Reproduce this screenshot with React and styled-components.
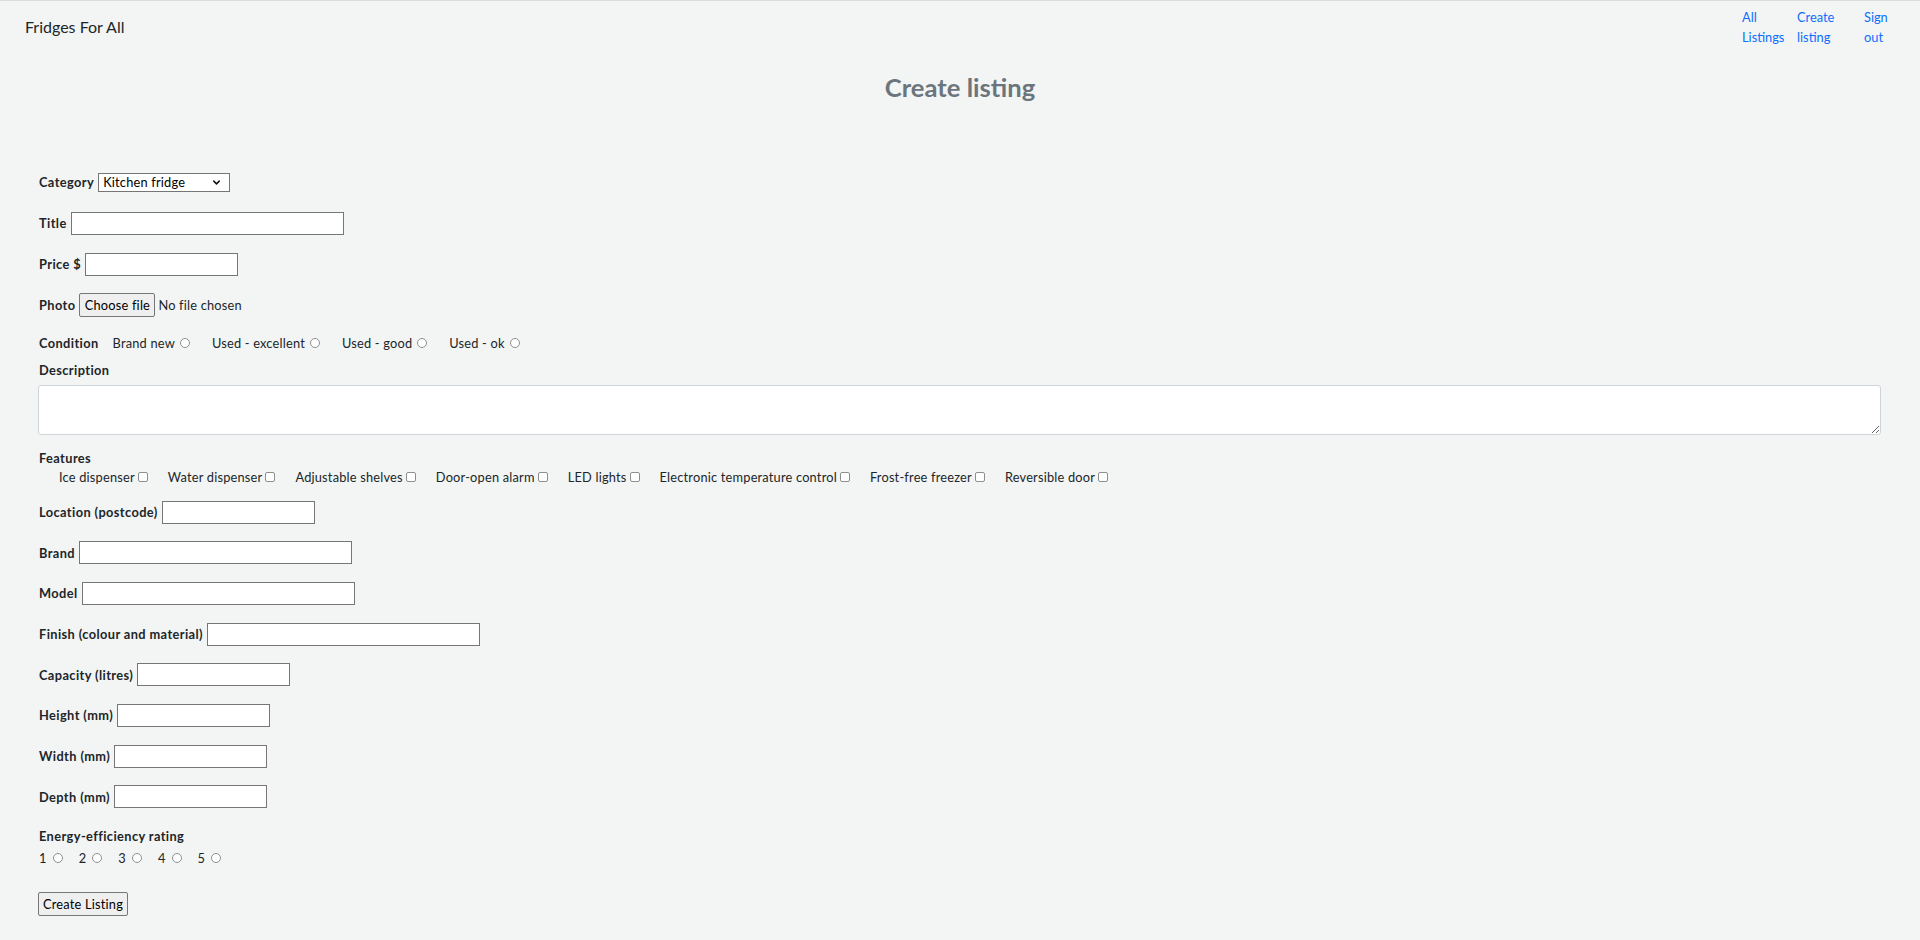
import styled, { createGlobalStyle } from "styled-components";
import { ChevronDown } from "lucide-react";

const conditions = ["Brand new", "Used - excellent", "Used - good", "Used - ok"];

const features = [
	"Ice dispenser",
	"Water dispenser",
	"Adjustable shelves",
	"Door-open alarm",
	"LED lights",
	"Electronic temperature control",
	"Frost-free freezer",
	"Reversible door",
];

const sizedFields = [
	{ label: "Location (postcode)", wide: false },
	{ label: "Brand", wide: true },
	{ label: "Model", wide: true },
	{ label: "Finish (colour and material)", wide: true },
	{ label: "Capacity (litres)", wide: false },
	{ label: "Height (mm)", wide: false },
	{ label: "Width (mm)", wide: false },
	{ label: "Depth (mm)", wide: false },
];

export default function App() {
	return (
		<StyledPage>
			<GlobalStyle />
			<Nav>
				<Brand>Fridges For All</Brand>
				<NavList>
					<NavItem $w={55}>
						<NavLink href="#">All Listings</NavLink>
					</NavItem>
					<NavItem $w={67}>
						<NavLink href="#">Create listing</NavLink>
					</NavItem>
					<NavItem $w={56}>
						<NavLink href="#">Sign out</NavLink>
					</NavItem>
				</NavList>
			</Nav>
			<TitlePage>Create listing</TitlePage>
			<Form onSubmit={(e) => e.preventDefault()}>
				<FieldRow>
					<Label>Category</Label>
					<SelectBox>
						<Select defaultValue="kitchen">
							<option value="kitchen">Kitchen fridge</option>
							<option value="bar">Bar fridge</option>
							<option value="freezer">Freezer</option>
						</Select>
						<SelectArrow>
							<ChevronDown size={11} strokeWidth={3.2} />
						</SelectArrow>
					</SelectBox>
				</FieldRow>
				<FieldRow>
					<Label>Title</Label>
					<TextInput $wide />
				</FieldRow>
				<FieldRow>
					<Label>Price $</Label>
					<TextInput />
				</FieldRow>
				<FieldRow $mb={14}>
					<Label>Photo</Label>
					<FileButton>
						Choose file
						<HiddenFile type="file" />
					</FileButton>
					<FileText>No file chosen</FileText>
				</FieldRow>
				<FieldRow $mb={6}>
					<Label>Condition</Label>
					{conditions.map((c, i) => (
						<Choice key={c} $ml={i === 0 ? 10 : 22}>
							{c}
							<Radio name="condition" />
						</Choice>
					))}
				</FieldRow>
				<BlockLabel>Description</BlockLabel>
				<TextArea />
				<BlockLabel>Features</BlockLabel>
				<FeatureRow>
					{features.map((f, i) => (
						<Choice key={f} $ml={i === 0 ? 0 : 20}>
							{f}
							<Checkbox />
						</Choice>
					))}
				</FeatureRow>
				{sizedFields.map((f, i) => (
					<FieldRow key={f.label} $mb={i === sizedFields.length - 1 ? 18 : 16.7}>
						<Label>{f.label}</Label>
						<TextInput $wide={f.wide} />
					</FieldRow>
				))}
				<BlockLabel>Energy-efficiency rating</BlockLabel>
				<RatingRow>
					{[1, 2, 3, 4, 5].map((n) => (
						<Choice key={n} $ml={n === 1 ? 0 : 16}>
							{n}
							<Radio name="rating" $gap={6} />
						</Choice>
					))}
				</RatingRow>
				<SubmitButton type="submit">Create Listing</SubmitButton>
			</Form>
		</StyledPage>
	);
}

const GlobalStyle = createGlobalStyle`
	body {
		margin: 0;
		background: #f2f5f4;
		font-family: Lato, "Liberation Sans", sans-serif;
		color: #212529;
	}
`;

const StyledPage = styled.div`
	min-height: 939px;
	border-top: 1px solid #d9dcdb;
	background: #f2f5f4;
`;

const Nav = styled.nav`
	height: 49px;
	display: flex;
	justify-content: space-between;
	align-items: flex-start;
`;

const Brand = styled.div`
	margin: 16px 0 0 25px;
	font-size: 16px;
	line-height: 20px;
	color: #212529;
`;

const NavList = styled.ul`
	display: flex;
	margin: 6px 0 0;
	padding: 0;
	list-style: none;
`;

const NavItem = styled.li`
	width: ${(p) => p.$w}px;
`;

const NavLink = styled.a`
	display: block;
	width: min-content;
	font-size: 12.8px;
	line-height: 20px;
	color: #0d6efd;
	text-decoration: none;
`;

const TitlePage = styled.h1`
	margin: 22px 0 0;
	font-size: 25.6px;
	line-height: 30px;
	font-weight: 700;
	text-align: center;
	color: #6c757d;
`;

const Form = styled.form`
	padding: 68px 39px 20px 38px;
	display: flex;
	flex-direction: column;
	align-items: flex-start;
`;

const FieldRow = styled.div`
	display: flex;
	align-items: center;
	height: 24px;
	margin-bottom: ${(p) => p.$mb ?? 17}px;
`;

const Label = styled.label`
	font-size: 12.8px;
	font-weight: 700;
	line-height: 18px;
	letter-spacing: 0.4px;
	margin: 0 4px 0 1px;
	color: #212529;
`;

const BlockLabel = styled.div`
	font-size: 12.8px;
	font-weight: 700;
	line-height: 18px;
	letter-spacing: 0.4px;
	height: 18px;
	margin: 0 0 6px 1px;
`;

const TextInput = styled.input.attrs({ type: "text" })`
	box-sizing: border-box;
	width: ${(p) => (p.$wide ? 273 : 153)}px;
	height: 23px;
	padding: 1px 3px;
	border: 1px solid #767676;
	border-radius: 0;
	background: #fff;
	font: 12.8px Lato, "Liberation Sans", sans-serif;
`;

const SelectBox = styled.div`
	position: relative;
	display: flex;
`;

const Select = styled.select`
	appearance: none;
	box-sizing: border-box;
	width: 132px;
	height: 19px;
	padding: 0 0 0 4px;
	border: 1px solid #767676;
	border-radius: 0;
	background: #fff;
	color: #000;
	font: 12.8px Lato, "Liberation Sans", sans-serif;
	letter-spacing: 0.2px;
`;

const SelectArrow = styled.span`
	position: absolute;
	right: 8px;
	top: 4px;
	display: flex;
	color: #111;
	pointer-events: none;
`;

const FileButton = styled.label`
	box-sizing: border-box;
	display: inline-flex;
	align-items: center;
	justify-content: center;
	width: 76px;
	height: 24px;
	border: 1px solid #767676;
	border-radius: 2px;
	background: #efefef;
	font-size: 12.8px;
	letter-spacing: 0.2px;
	color: #000;
`;

const HiddenFile = styled.input`
	display: none;
`;

const FileText = styled.span`
	margin-left: 3px;
	font-size: 12.8px;
	letter-spacing: 0.2px;
	color: #212529;
`;

const Choice = styled.label`
	display: inline-flex;
	align-items: center;
	margin-left: ${(p) => p.$ml}px;
	font-size: 12.8px;
	line-height: 18px;
	letter-spacing: 0.2px;
	color: #212529;
`;

const Radio = styled.input.attrs({ type: "radio" })`
	appearance: none;
	box-sizing: border-box;
	width: 10px;
	height: 10px;
	margin: 0 0 0 ${(p) => p.$gap ?? 5}px;
	border: 1px solid #8f8f8f;
	border-radius: 50%;
	background: #fff;
`;

const Checkbox = styled.input.attrs({ type: "checkbox" })`
	appearance: none;
	box-sizing: border-box;
	width: 10px;
	height: 10px;
	margin: 0 0 0 3px;
	border: 1px solid #8f8f8f;
	border-radius: 2px;
	background: #fff;
`;

const TextArea = styled.textarea`
	box-sizing: border-box;
	display: block;
	width: 100%;
	height: 50px;
	margin-bottom: 14px;
	padding: 5px 10px;
	border: 1px solid #ced4da;
	border-radius: 3px;
	background: #fff;
	font: 12.8px Lato, "Liberation Sans", sans-serif;
`;

const FeatureRow = styled.div`
	display: flex;
	align-items: center;
	height: 18px;
	padding-left: 21px;
	margin: -5px 0 14px;
`;

const RatingRow = styled.div`
	display: flex;
	align-items: center;
	height: 18px;
	margin: -2px 0 25px 1px;
`;

const SubmitButton = styled.button`
	box-sizing: border-box;
	width: 90px;
	height: 24px;
	padding: 0;
	border: 1px solid #767676;
	border-radius: 2px;
	background: #efefef;
	font: 12.8px Lato, "Liberation Sans", sans-serif;
	letter-spacing: 0.2px;
	color: #000;
`;
